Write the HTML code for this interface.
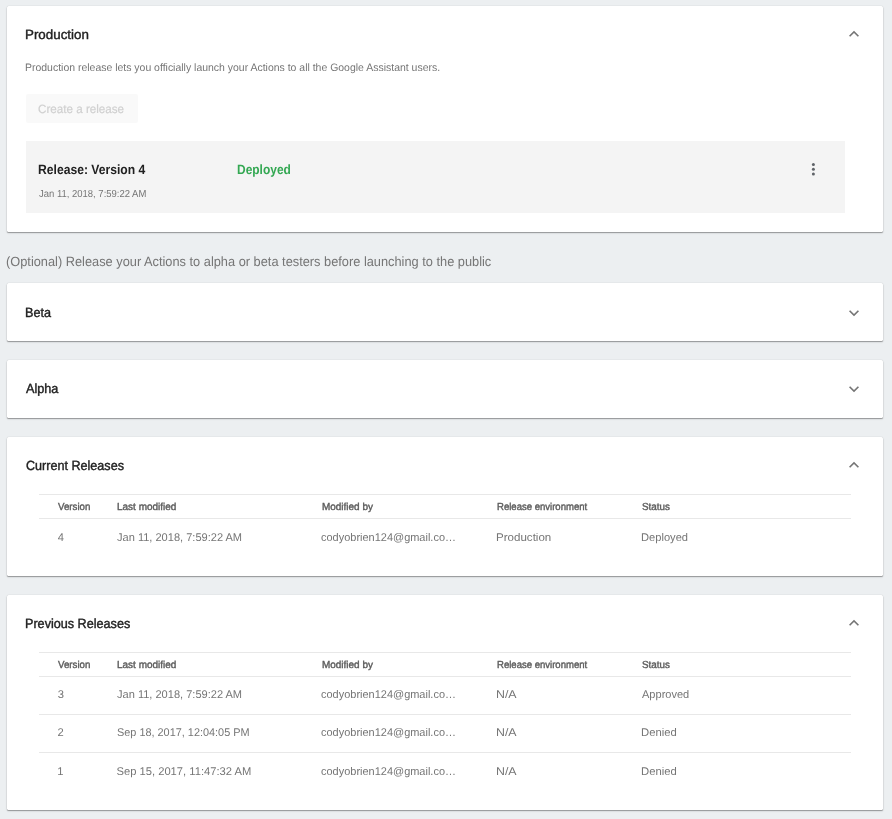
<!DOCTYPE html>
<html><head><meta charset="utf-8"><style>
html,body{margin:0;padding:0;}
body{width:892px;height:819px;overflow:hidden;background:#eceff1;position:relative;font-family:"Liberation Sans",sans-serif;}
.c{position:absolute;background:#fff;border-radius:1.5px;box-shadow:0 1px 1px 0 rgba(0,0,0,.32),0 0 1px 0 rgba(0,0,0,.2),0 1px 3px 0 rgba(0,0,0,.08);}
.t{position:absolute;white-space:nowrap;line-height:1;transform-origin:0 0;text-rendering:geometricPrecision;}
#tx{position:absolute;left:0;top:0;width:892px;height:819px;will-change:transform;}
.i{position:absolute;}
.ln{position:absolute;left:39px;width:812px;height:1px;background:#e8e8e8;}
</style></head><body>
<div class="c" style="left:7px;top:6px;width:876px;height:226px"></div>
<div class="c" style="left:7px;top:283px;width:876px;height:58px"></div>
<div class="c" style="left:7px;top:360px;width:876px;height:58px"></div>
<div class="c" style="left:7px;top:437px;width:876px;height:139px"></div>
<div class="c" style="left:7px;top:595px;width:876px;height:215px"></div>
<div style="position:absolute;left:26px;top:94px;width:112px;height:29px;background:#f9f9f9;border-radius:2px"></div>
<div style="position:absolute;left:26px;top:141px;width:819px;height:72px;background:#f4f4f4"></div>
<div class="ln" style="top:494px"></div>
<div class="ln" style="top:518px"></div>
<div class="ln" style="top:652px"></div>
<div class="ln" style="top:676px"></div>
<div class="ln" style="top:714px"></div>
<div class="ln" style="top:752px"></div>
<svg class="i" style="left:844.10px;top:24.10px;width:20px;height:20px" viewBox="0 0 24 24"><path fill="#757575" d="M12 8l-6 6 1.41 1.41L12 10.83l4.59 4.58L18 14z"/></svg>
<svg class="i" style="left:844.40px;top:302.60px;width:20px;height:20px" viewBox="0 0 24 24"><path fill="#757575" d="M16.59 8.59L12 13.17 7.41 8.59 6 10l6 6 6-6z"/></svg>
<svg class="i" style="left:844.40px;top:378.60px;width:20px;height:20px" viewBox="0 0 24 24"><path fill="#757575" d="M16.59 8.59L12 13.17 7.41 8.59 6 10l6 6 6-6z"/></svg>
<svg class="i" style="left:844.10px;top:455.30px;width:20px;height:20px" viewBox="0 0 24 24"><path fill="#757575" d="M12 8l-6 6 1.41 1.41L12 10.83l4.59 4.58L18 14z"/></svg>
<svg class="i" style="left:844.10px;top:613.40px;width:20px;height:20px" viewBox="0 0 24 24"><path fill="#757575" d="M12 8l-6 6 1.41 1.41L12 10.83l4.59 4.58L18 14z"/></svg>
<svg class="i" style="left:803px;top:159px;width:20px;height:20px" viewBox="803 159 20 20"><g fill="#5f6368"><circle cx="813.4" cy="164.5" r="1.5"/><circle cx="813.4" cy="169.25" r="1.5"/><circle cx="813.4" cy="174" r="1.5"/></g></svg>
<div id="tx">
<div class="t" style="left:25.16px;top:28px;font-size:13.3px;color:#212121;transform:scaleX(1.0049);-webkit-text-stroke:0.4px #212121;">Production</div>
<div class="t" style="left:25.18px;top:63px;font-size:10.8px;color:#757575;transform:scaleX(0.9691);">Production release lets you officially launch your Actions to all the Google Assistant users.</div>
<div class="t" style="left:38.42px;top:103px;font-size:12px;color:#d0d0d0;transform:scaleX(0.9704);-webkit-text-stroke:0.2px #d0d0d0;">Create a release</div>
<div class="t" style="left:38.24px;top:163px;font-size:13.3px;color:#212121;transform:scaleX(0.9126);font-weight:bold;">Release: Version 4</div>
<div class="t" style="left:38.86px;top:190px;font-size:10.2px;color:#757575;transform:scaleX(0.9304);">Jan 11, 2018, 7:59:22 AM</div>
<div class="t" style="left:236.85px;top:163px;font-size:13.3px;color:#34a853;transform:scaleX(0.9006);font-weight:bold;">Deployed</div>
<div class="t" style="left:6.40px;top:255px;font-size:13.4px;color:#757575;transform:scaleX(0.9559);">(Optional) Release your Actions to alpha or beta testers before launching to the public</div>
<div class="t" style="left:25.21px;top:306px;font-size:13.3px;color:#212121;transform:scaleX(0.9506);-webkit-text-stroke:0.4px #212121;">Beta</div>
<div class="t" style="left:26.10px;top:382px;font-size:13.3px;color:#212121;transform:scaleX(0.9531);-webkit-text-stroke:0.4px #212121;">Alpha</div>
<div class="t" style="left:25.51px;top:459px;font-size:13.3px;color:#212121;transform:scaleX(0.9468);-webkit-text-stroke:0.4px #212121;">Current Releases</div>
<div class="t" style="left:25.21px;top:617px;font-size:13.3px;color:#212121;transform:scaleX(0.9494);-webkit-text-stroke:0.4px #212121;">Previous Releases</div>
<div class="t" style="left:58.00px;top:503px;font-size:10.2px;color:#5c5c5c;transform:scaleX(0.9521);-webkit-text-stroke:0.4px #5c5c5c;">Version</div>
<div class="t" style="left:116.72px;top:503px;font-size:10.2px;color:#5c5c5c;transform:scaleX(0.9807);-webkit-text-stroke:0.4px #5c5c5c;">Last modified</div>
<div class="t" style="left:321.52px;top:503px;font-size:10.2px;color:#5c5c5c;transform:scaleX(0.9774);-webkit-text-stroke:0.4px #5c5c5c;">Modified by</div>
<div class="t" style="left:496.75px;top:503px;font-size:10.2px;color:#5c5c5c;transform:scaleX(0.9367);-webkit-text-stroke:0.4px #5c5c5c;">Release environment</div>
<div class="t" style="left:641.86px;top:503px;font-size:10.2px;color:#5c5c5c;transform:scaleX(0.9674);-webkit-text-stroke:0.4px #5c5c5c;">Status</div>
<div class="t" style="left:58.00px;top:661px;font-size:10.2px;color:#5c5c5c;transform:scaleX(0.9521);-webkit-text-stroke:0.4px #5c5c5c;">Version</div>
<div class="t" style="left:116.72px;top:661px;font-size:10.2px;color:#5c5c5c;transform:scaleX(0.9807);-webkit-text-stroke:0.4px #5c5c5c;">Last modified</div>
<div class="t" style="left:321.52px;top:661px;font-size:10.2px;color:#5c5c5c;transform:scaleX(0.9774);-webkit-text-stroke:0.4px #5c5c5c;">Modified by</div>
<div class="t" style="left:496.75px;top:661px;font-size:10.2px;color:#5c5c5c;transform:scaleX(0.9367);-webkit-text-stroke:0.4px #5c5c5c;">Release environment</div>
<div class="t" style="left:641.86px;top:661px;font-size:10.2px;color:#5c5c5c;transform:scaleX(0.9674);-webkit-text-stroke:0.4px #5c5c5c;">Status</div>
<div class="t" style="left:57.85px;top:533px;font-size:11.2px;color:#757575;">4</div>
<div class="t" style="left:116.85px;top:533px;font-size:11.2px;color:#757575;transform:scaleX(0.9873);">Jan 11, 2018, 7:59:22 AM</div>
<div class="t" style="left:321.36px;top:533px;font-size:11.2px;color:#757575;transform:scaleX(0.9808);">codyobrien124@gmail.co…</div>
<div class="t" style="left:496.07px;top:533px;font-size:11.2px;color:#757575;transform:scaleX(1.0334);">Production</div>
<div class="t" style="left:640.90px;top:533px;font-size:11.2px;color:#757575;transform:scaleX(0.9947);">Deployed</div>
<div class="t" style="left:57.70px;top:690px;font-size:11.2px;color:#757575;">3</div>
<div class="t" style="left:116.85px;top:690px;font-size:11.2px;color:#757575;transform:scaleX(0.9873);">Jan 11, 2018, 7:59:22 AM</div>
<div class="t" style="left:321.36px;top:690px;font-size:11.2px;color:#757575;transform:scaleX(0.9808);">codyobrien124@gmail.co…</div>
<div class="t" style="left:496.01px;top:690px;font-size:11.2px;color:#757575;transform:scaleX(1.1042);">N/A</div>
<div class="t" style="left:641.80px;top:690px;font-size:11.2px;color:#757575;transform:scaleX(0.9859);">Approved</div>
<div class="t" style="left:57.55px;top:728px;font-size:11.2px;color:#757575;">2</div>
<div class="t" style="left:116.51px;top:728px;font-size:11.2px;color:#757575;transform:scaleX(0.9734);">Sep 18, 2017, 12:04:05 PM</div>
<div class="t" style="left:321.36px;top:728px;font-size:11.2px;color:#757575;transform:scaleX(0.9808);">codyobrien124@gmail.co…</div>
<div class="t" style="left:496.01px;top:728px;font-size:11.2px;color:#757575;transform:scaleX(1.1042);">N/A</div>
<div class="t" style="left:640.89px;top:728px;font-size:11.2px;color:#757575;transform:scaleX(1.0085);">Denied</div>
<div class="t" style="left:57.25px;top:767px;font-size:11.2px;color:#757575;">1</div>
<div class="t" style="left:116.50px;top:767px;font-size:11.2px;color:#757575;">Sep 15, 2017, 11:47:32 AM</div>
<div class="t" style="left:321.36px;top:767px;font-size:11.2px;color:#757575;transform:scaleX(0.9808);">codyobrien124@gmail.co…</div>
<div class="t" style="left:496.01px;top:767px;font-size:11.2px;color:#757575;transform:scaleX(1.1042);">N/A</div>
<div class="t" style="left:640.89px;top:767px;font-size:11.2px;color:#757575;transform:scaleX(1.0085);">Denied</div>
</div>
</body></html>
